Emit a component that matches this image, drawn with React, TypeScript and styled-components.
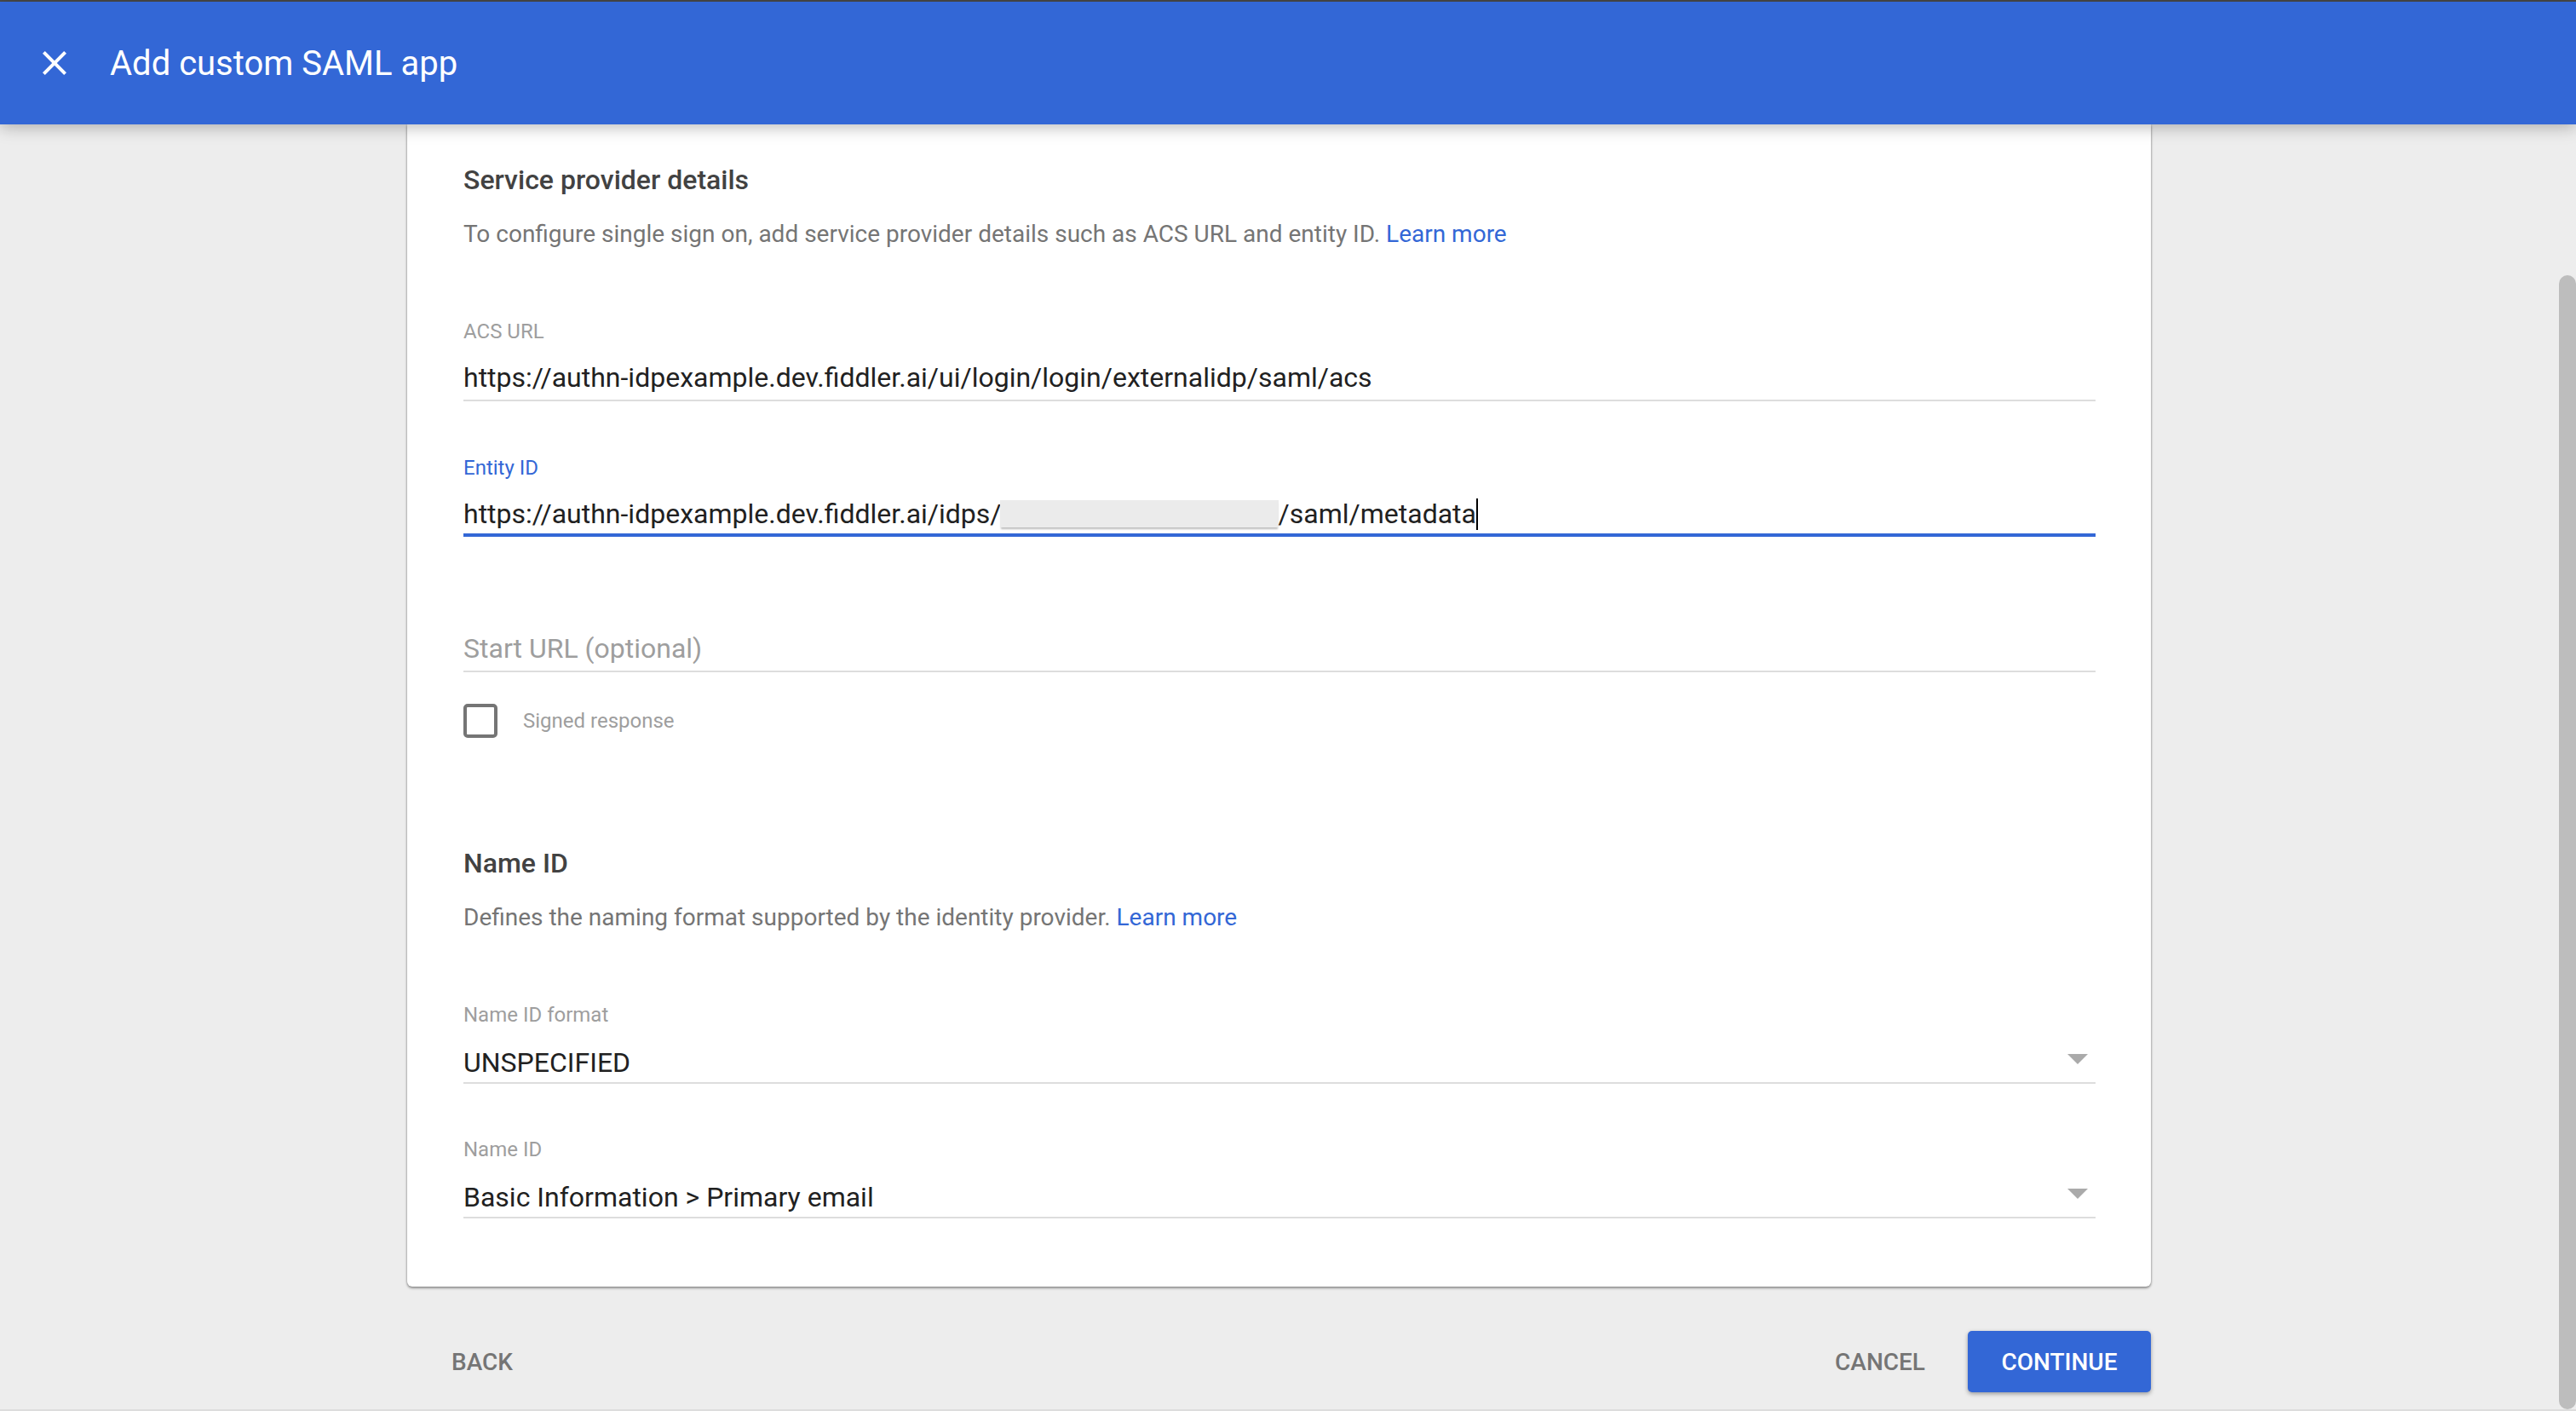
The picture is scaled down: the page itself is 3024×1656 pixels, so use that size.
import React from "react";
import styled, { createGlobalStyle } from "styled-components";

const GlobalStyle = createGlobalStyle`
  * {
    box-sizing: border-box;
    margin: 0;
    padding: 0;
  }

  html, body, #root {
    height: 100%;
    overflow: hidden;
  }

  body {
    font-family: Roboto, "Liberation Sans", sans-serif;
    background: #ededed;
  }
`;

const Page = styled.div`
  position: relative;
  display: flex;
  flex-direction: column;
  height: 1656px;
  border-top: 2px solid #4a4a4a;
  border-bottom: 2px solid #dddddd;
  background: #ededed;
`;

const Header = styled.header`
  position: relative;
  z-index: 2;
  flex: none;
  display: flex;
  align-items: center;
  gap: 41px;
  height: 144px;
  padding-left: 40px;
  background: #3367d6;
  box-shadow: 0 3px 18px rgba(0, 0, 0, 0.28);
`;

const CloseIcon = styled.svg`
  display: block;
  width: 48px;
  height: 48px;
  fill: #ffffff;
`;

const Title = styled.h1`
  font-size: 40px;
  font-weight: 400;
  color: #ffffff;
`;

const Main = styled.main`
  flex: 1;
  display: flex;
  flex-direction: column;
  align-items: center;
  width: 3003px;
`;

const Card = styled.section`
  width: 2047px;
  height: 1364px;
  padding: 45px 65px 0 66px;
  background: #ffffff;
  border-radius: 0 0 6px 6px;
  box-shadow: 0 2px 3px rgba(0, 0, 0, 0.35), 0 0 3px rgba(0, 0, 0, 0.25);
`;

const SectionTitle = styled.h2<{ $top?: number }>`
  margin-top: ${(p) => p.$top ?? 0}px;
  font-size: 32px;
  font-weight: 500;
  line-height: 40px;
  color: #424242;
`;

const Description = styled.p`
  margin-top: 24px;
  font-size: 28px;
  line-height: 40px;
  color: #757575;
`;

const Link = styled.a`
  color: #3367d6;
  text-decoration: none;
`;

const Fields = styled.div<{ $top: number; $gap?: number }>`
  display: flex;
  flex-direction: column;
  gap: ${(p) => p.$gap ?? 0}px;
  margin-top: ${(p) => p.$top}px;
`;

const Field = styled.div<{ $focused?: boolean; $select?: boolean }>`
  position: relative;
  height: ${(p) => (p.$focused || p.$select ? 96 : 97)}px;
  border-bottom: ${(p) => (p.$focused ? "4px solid #3367d6" : "2px solid #dddddd")};
`;

const FieldLabel = styled.label<{ $focused?: boolean }>`
  display: block;
  height: 32px;
  font-size: 24px;
  line-height: 31px;
  color: ${(p) => (p.$focused ? "#3367d6" : "#9e9e9e")};
`;

const Value = styled.div<{ $placeholder?: boolean; $select?: boolean }>`
  display: flex;
  align-items: center;
  height: 44px;
  margin-top: ${(p) => (p.$select ? 17 : 15)}px;
  font-size: 32px;
  line-height: 44px;
  white-space: pre;
  color: ${(p) => (p.$placeholder ? "#9e9e9e" : "#212121")};
`;

const Redacted = styled.span`
  flex: none;
  width: 327px;
  height: 32px;
  margin-left: -2px;
  background: #ebebeb;
  box-shadow: 0 3px 2px -1px #bdbdbd;
`;

const Caret = styled.span`
  flex: none;
  width: 2px;
  height: 37px;
  background: #000000;
`;

const Arrow = styled.span`
  position: absolute;
  right: 9px;
  top: 61px;
  width: 0;
  height: 0;
  border-left: 12.5px solid transparent;
  border-right: 12.5px solid transparent;
  border-top: 12px solid #aaaaaa;
`;

const CheckRow = styled.div`
  display: flex;
  align-items: center;
  gap: 30px;
  margin-top: 37px;
`;

const Checkbox = styled.span`
  width: 40px;
  height: 40px;
  border: 4px solid #757575;
  border-radius: 5px;
`;

const CheckLabel = styled.span`
  font-size: 24px;
  color: #9e9e9e;
`;

const Footer = styled.footer`
  display: flex;
  align-items: center;
  width: 2047px;
  margin-top: 52px;
`;

const TextButton = styled.button<{ $push?: boolean }>`
  height: 72px;
  padding: ${(p) => (p.$push ? "0 52px" : "0 50px 0 52px")};
  margin-right: ${(p) => (p.$push ? "auto" : "0")};
  border: none;
  background: none;
  font-family: inherit;
  font-size: 28px;
  font-weight: 500;
  color: #757575;
`;

const PrimaryButton = styled.button`
  width: 215px;
  height: 72px;
  border: none;
  border-radius: 5px;
  background: #3367d6;
  font-family: inherit;
  font-size: 28px;
  font-weight: 500;
  color: #ffffff;
  box-shadow: 0 2px 5px rgba(0, 0, 0, 0.35);
`;

const ScrollThumb = styled.div`
  position: absolute;
  right: 0;
  top: 321px;
  bottom: 0;
  width: 20px;
  border-radius: 10px;
  background: #bdbdbd;
`;

const App: React.FC = () => {
  return (
    <>
      <GlobalStyle />
      <Page>
        <Header>
          <CloseIcon viewBox="0 0 24 24">
            <path d="M19 6.41L17.59 5 12 10.59 6.41 5 5 6.41 10.59 12 5 17.59 6.41 19 12 13.41 17.59 19 19 17.59 13.41 12z" />
          </CloseIcon>
          <Title>Add custom SAML app</Title>
        </Header>
        <Main>
          <Card>
            <SectionTitle>Service provider details</SectionTitle>
            <Description>
              To configure single sign on, add service provider details such as ACS URL and entity ID.{" "}
              <Link>Learn more</Link>
            </Description>
            <Fields $top={79} $gap={63}>
              <Field>
                <FieldLabel>ACS URL</FieldLabel>
                <Value>https://authn-idpexample.dev.fiddler.ai/ui/login/login/externalidp/saml/acs</Value>
              </Field>
              <Field $focused>
                <FieldLabel $focused>Entity ID</FieldLabel>
                <Value>
                  https://authn-idpexample.dev.fiddler.ai/idps/
                  <Redacted />
                  /saml/metadata
                  <Caret />
                </Value>
              </Field>
            </Fields>
            <Fields $top={62}>
              <Field>
                <FieldLabel />
                <Value $placeholder>Start URL (optional)</Value>
              </Field>
            </Fields>
            <CheckRow>
              <Checkbox />
              <CheckLabel>Signed response</CheckLabel>
            </CheckRow>
            <SectionTitle $top={127}>Name ID</SectionTitle>
            <Description>
              Defines the naming format supported by the identity provider. <Link>Learn more</Link>
            </Description>
            <Fields $top={79} $gap={62}>
              <Field $select>
                <FieldLabel>Name ID format</FieldLabel>
                <Value $select>UNSPECIFIED</Value>
                <Arrow />
              </Field>
              <Field $select>
                <FieldLabel>Name ID</FieldLabel>
                <Value $select>Basic Information &gt; Primary email</Value>
                <Arrow />
              </Field>
            </Fields>
          </Card>
          <Footer>
            <TextButton $push>BACK</TextButton>
            <TextButton>CANCEL</TextButton>
            <PrimaryButton>CONTINUE</PrimaryButton>
          </Footer>
        </Main>
        <ScrollThumb />
      </Page>
    </>
  );
};

export default App;
